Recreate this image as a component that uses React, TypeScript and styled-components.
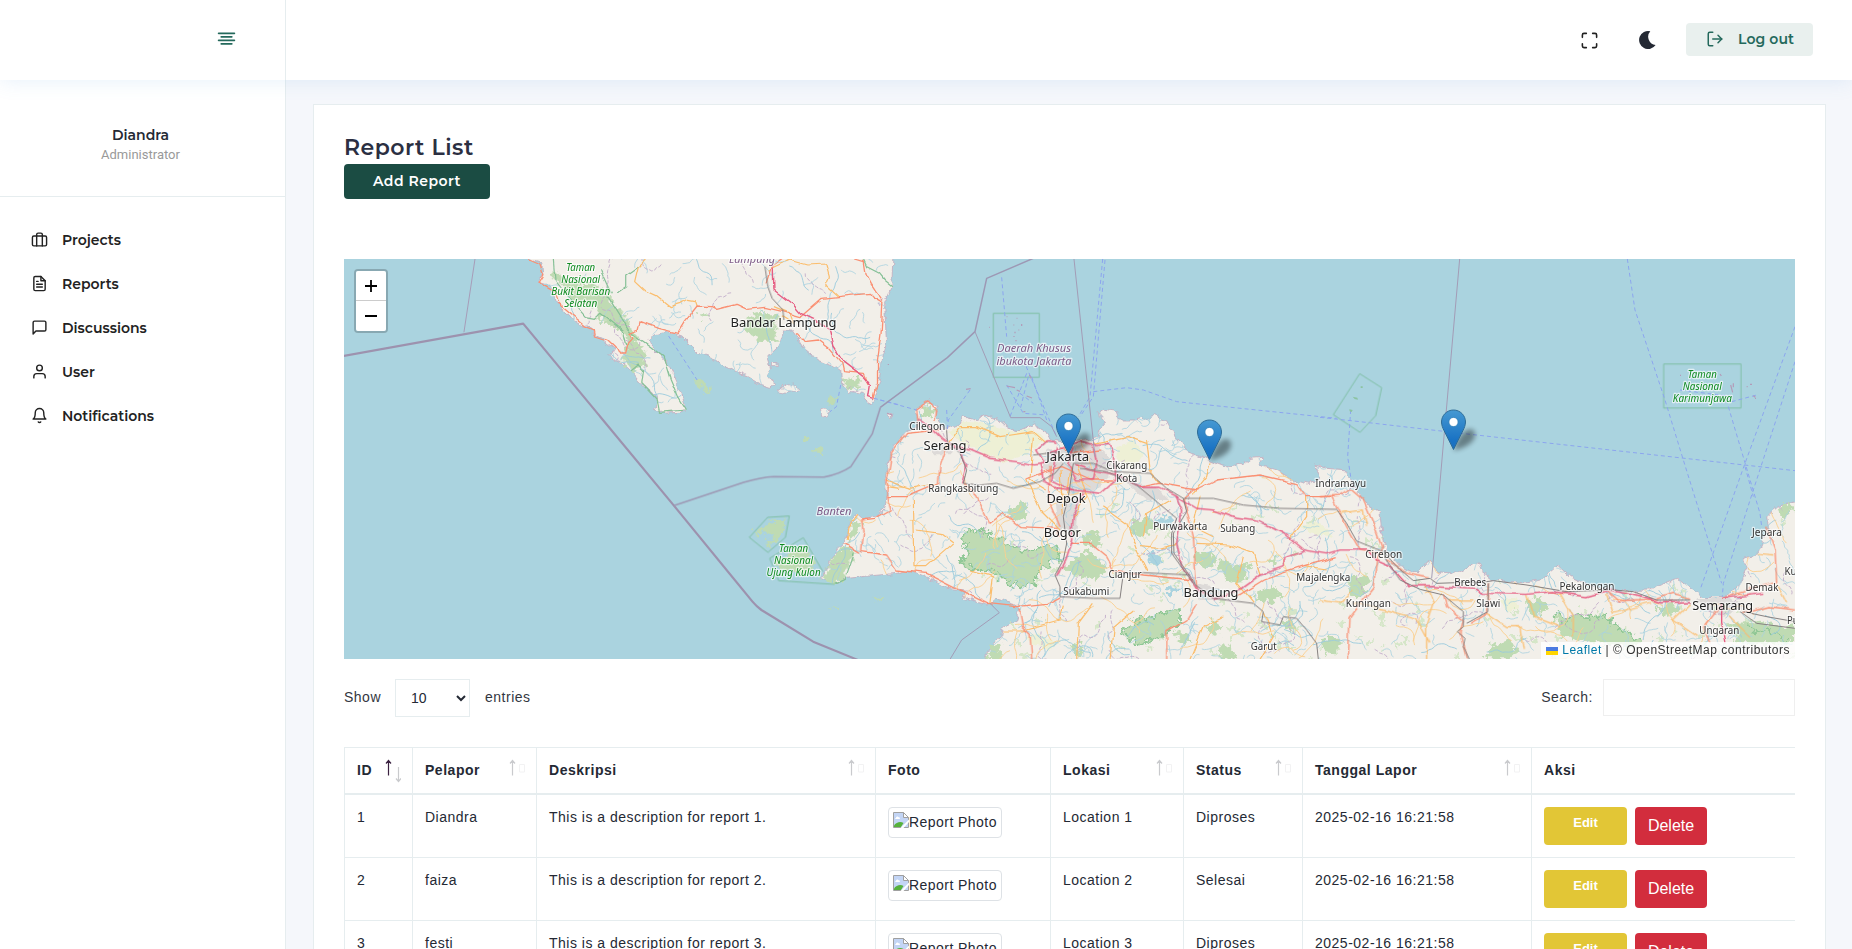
import React from "react";
import styled, { createGlobalStyle } from "styled-components";
import {
  FiAlignCenter,
  FiBell,
  FiBriefcase,
  FiFileText,
  FiLogOut,
  FiMaximize,
  FiMessageSquare,
  FiUser,
} from "react-icons/fi";

const body = '"Liberation Sans", Arial, sans-serif';
const heading = 'Montserrat, Inter, "Open Sans", sans-serif';
const line = "#e6edef";

const GlobalStyle = createGlobalStyle`
  * { box-sizing: border-box; }
  body {
    margin: 0;
    background: #f5f7fb;
    color: #242934;
    font: 14px/21px ${body};
    letter-spacing: 0.5px;
  }
`;

const Page = styled.div`
  height: 949px;
  overflow: hidden;
  display: flex;
  flex-direction: column;
`;

/* ---------- top bar ---------- */

const TopBar = styled.header`
  position: relative;
  z-index: 1;
  flex: none;
  height: 80px;
  display: flex;
  background: #fff;
  box-shadow: 0 0 20px rgba(89, 157, 222, 0.16);
`;

const Brand = styled.div`
  width: 286px;
  border-right: 1px solid ${line};
  padding: 28px 48px 0 0;
  display: flex;
  justify-content: flex-end;
  color: #24695c;
`;

const Actions = styled.div`
  flex: 1;
  display: flex;
  justify-content: flex-end;
  align-items: center;
  padding-right: 39px;
`;

const IconSlot = styled.span<{ $gap: number }>`
  display: flex;
  margin-right: ${(p) => p.$gap}px;
`;

const LogOut = styled.button`
  display: flex;
  align-items: center;
  width: 127px;
  height: 33px;
  margin-bottom: 1px;
  padding: 0 0 1px 20px;
  gap: 14px;
  border: 0;
  border-radius: 4px;
  background: #e9f0ee;
  color: #24695c;
  font: 600 14px/20px ${heading};
  letter-spacing: 0.1px;
  white-space: nowrap;
`;

/* ---------- side bar ---------- */

const Columns = styled.div`
  flex: 1;
  min-height: 0;
  display: flex;
`;

const SideBar = styled.aside`
  width: 286px;
  flex: none;
  background: #fff;
  border-right: 1px solid ${line};
`;

const Profile = styled.div`
  height: 117px;
  padding: 45px 4px 0 0;
  text-align: center;
  border-bottom: 1px solid ${line};
`;

const ProfileName = styled.div`
  font: 600 14px/21px ${heading};
  letter-spacing: 0;
`;

const ProfileRole = styled.div`
  font: 13px/18px Roboto, sans-serif;
  letter-spacing: 0;
  color: #999;
`;

const Menu = styled.nav`
  padding-top: 21px;
`;

const MenuItem = styled.a`
  display: flex;
  align-items: center;
  height: 44px;
  padding-left: 31px;
  gap: 14px;
  font: 600 14px/20px ${heading};
  letter-spacing: 0;
  color: #222;

  svg {
    position: relative;
    top: -1px;
  }
`;

/* ---------- card ---------- */

const Main = styled.main`
  flex: 1;
  min-width: 0;
  padding: 24px 26px 0 27px;
`;

const Card = styled.section`
  height: 900px;
  border: 1px solid ${line};
  background: #fff;
  padding: 29px 30px 0 30px;
`;

const Title = styled.h1`
  margin: 0;
  height: 30px;
  font: 600 22px/28px ${heading};
  letter-spacing: 0.5px;
  color: #2b2f42;
`;

const AddButton = styled.button`
  display: block;
  width: 146px;
  height: 35px;
  margin-bottom: 60px;
  padding: 0 0 2px;
  border: 0;
  border-radius: 4px;
  background: #1b4c43;
  color: #fff;
  font: 600 14px/20px ${heading};
  letter-spacing: 0.5px;
`;

/* ---------- map ---------- */

const MapFrame = styled.div`
  position: relative;
  height: 400px;
  overflow: hidden;
  background: #aad3df;
`;

const MapSvg = styled.svg`
  display: block;
`;

const Zoom = styled.div`
  position: absolute;
  left: 10px;
  top: 10px;
  width: 34px;
  border: 2px solid rgba(0, 0, 0, 0.2);
  background-clip: padding-box;
  border-radius: 4px;
`;

const ZoomButton = styled.button`
  display: flex;
  align-items: center;
  justify-content: center;
  width: 30px;
  height: 30px;
  padding: 0;
  border: 0;
  background: #fff;
  border-radius: 0 0 2px 2px;

  &:first-child {
    border-bottom: 1px solid #ccc;
    border-radius: 2px 2px 0 0;
  }
`;

const Attribution = styled.div`
  position: absolute;
  right: 0;
  bottom: 0;
  display: flex;
  align-items: center;
  height: 17px;
  padding: 0 5px;
  background: rgba(255, 255, 255, 0.8);
  font: 12px/17px ${body};
  letter-spacing: 0.5px;
  color: #333;
  white-space: pre;

  svg {
    margin-right: 4px;
  }
  a {
    color: #0078a8;
  }
`;

/* ---------- table ---------- */

const Controls = styled.div`
  display: flex;
  justify-content: space-between;
  height: 88px;
  padding-top: 20px;
`;

const Control = styled.label<{ $gap: number }>`
  display: flex;
  align-items: center;
  height: 37px;
  gap: ${(p) => p.$gap}px;
  color: #33373f;
`;

const LengthSelect = styled.select`
  width: 75px;
  height: 38px;
  margin-right: 1px;
  padding: 0 0 0 11px;
  border: 1px solid ${line};
  border-radius: 0;
  background: #fff;
  color: #242934;
  font: 14px ${body};
  letter-spacing: 0;
`;

const SearchInput = styled.input`
  width: 192px;
  height: 37px;
  border: 1px solid #efefef;
  background: #fff;
`;

const Table = styled.table`
  width: 1451px;
  table-layout: fixed;
  border-spacing: 0;
  border-top: 1px solid ${line};
`;

const Th = styled.th`
  height: 47px;
  padding: 0 11px 0 12px;
  border-left: 1px solid ${line};
  border-bottom: 2px solid ${line};
  text-align: left;
  font-weight: 700;
  letter-spacing: 0.52px;
`;

const ThInner = styled.div`
  display: flex;
  justify-content: space-between;
  align-items: center;
  height: 45px;
  white-space: nowrap;
`;

const Td = styled.td`
  height: 63px;
  padding: 12px 0 0 12px;
  border-left: 1px solid ${line};
  border-bottom: 1px solid ${line};
  vertical-align: top;
  white-space: nowrap;
`;

const Photo = styled.div`
  display: flex;
  width: 114px;
  height: 31px;
  padding: 4px;
  border: 1px solid #dee2e6;
  border-radius: 4px;
  letter-spacing: 0.45px;
`;

const Buttons = styled.div`
  display: flex;
  gap: 8px;
`;

const EditButton = styled.button`
  width: 83px;
  height: 38px;
  padding: 0 0 7px;
  border: 0;
  border-radius: 4px;
  background: #e2c636;
  color: #fff;
  font: 700 13px/18px ${body};
  letter-spacing: 0;
`;

const DeleteButton = styled.button`
  width: 72px;
  height: 38px;
  padding: 0;
  border: 0;
  border-radius: 4px;
  background: #d22d3d;
  color: #fff;
  font: 16px/24px ${body};
`;

/* ---------- map data ---------- */

const SUMATRA =
  "M527,20L530,30 565,40 568,75 555,97 580,105 600,130 610,165 640,190 660,215 700,238 715,258 740,270 770,295 750,320 785,335 815,362 845,400 885,440 890,462 880,475 895,487 970,483 968,470 955,430 930,370 915,335 885,300 862,270 880,255 920,245 955,258 985,290 1000,307 1040,322 1065,345 1100,360 1140,380 1175,402 1205,412 1220,400 1190,380 1205,355 1195,320 1225,290 1240,240 1265,240 1285,270 1300,295 1340,330 1385,350 1405,365 1408,405 1430,425 1465,430 1480,465 1495,445 1510,390 1520,320 1530,280 1525,160 1545,110 1548,20Z" +
  "M1225,425L1250,405 1270,402 1285,418 1250,430ZM1345,490a12,13 0 1 0 24,0a12,13 0 1 0 -24,0ZM1532,490L1548,487 1545,508ZM1208,335h16v15h-16Z";

const JAVA =
  "M-10,790L10,808 45,800 75,775 82,735 75,690 82,650 100,590 140,545 175,530 170,485 185,462 205,453 228,468 230,505 255,540 300,520 310,500 350,512 370,495 415,508 440,530 480,540 520,522 560,545 575,570 600,575 660,570 715,560 720,540 740,515 715,488 730,478 765,483 775,510 830,510 880,497 920,512 945,560 985,605 1050,630 1100,650 1150,640 1170,625 1210,622 1195,645 1250,660 1300,690 1345,702 1380,680 1365,645 1400,655 1460,660 1470,690 1495,730 1520,765 1560,785 1565,850 1580,900 1620,945 1650,960 1680,965 1710,930 1730,965 1790,970 1850,935 1860,960 1900,990 1990,998 2050,985 2095,948 2130,980 2200,1010 2280,1022 2370,1020 2455,985 2480,1005 2530,1040 2600,1040 2640,1000 2665,950 2650,925 2690,915 2710,870 2725,830 2720,800 2760,765 2820,752 2820,1240 370,1240 400,1180 425,1160 430,1130 470,1110 480,1080 465,1060 410,1045 385,1065 345,1055 310,1045 320,1020 260,1015 200,980 150,960 110,970 26,978 -40,985 -80,1000 -119,985 -97,960 -92,930 -65,895 -39,870 -33,830Z";

const WEST = "translate(-4 -9) scale(.357143 .333333)";
const MID = "translate(516 -9) scale(.333333)";
const EAST = "translate(976 -9) scale(.333333)";

type Layer = { tile: string; d: string };

const forests: Layer[] = [
  {
    tile: WEST,
    d: "M595,60L640,95 700,100 735,120 770,165 800,200 812,245 850,290 855,345 815,362 790,335 803,285 795,250 750,215 725,215 710,170 640,140 595,80ZM1135,205L1165,190 1220,190 1222,275 1180,275 1130,240ZM1412,390L1430,382 1455,390 1452,412 1430,420 1415,412ZM995,387L1015,398 1035,412 1032,435 1010,420ZM1362,445l12,-10 14,6 -8,22 -14,4ZM1290,578l12,-14 12,2 -14,12ZM1320,598l22,-4 4,12 -18,6ZM1160,855L1200,815 1245,808 1240,845 1215,875 1200,892 1195,885 1210,860 1190,840 1165,862ZM1222,935L1265,900 1300,885 1315,920 1330,950 1318,978 1260,960 1230,958ZM1345,985L1365,960 1370,930 1410,888 1440,908 1415,960 1415,985 1385,1000ZM1372,1075l14,-8 14,8 -14,5ZM1498,1050l25,-10 4,6 -26,9ZM1430,810L1465,820 1450,850 1425,880ZM1010,190h16v14h-16Z",
  },
  {
    tile: MID,
    d: "M320,835L350,850 365,835 400,865 430,865 440,885 480,900 530,895 590,885 597,920 560,950 540,955 520,1000 490,1010 450,1005 430,980 380,960 340,960 300,930 330,910 305,880ZM620,960L640,925 680,905 720,925 740,960 710,985 660,980ZM805,830L825,810 870,800 885,830 850,860 820,855ZM1005,930L1020,905 1060,910 1070,940 1040,955ZM1080,970L1075,930 1120,945 1175,940 1150,990 1110,995ZM785,1145L830,1110 900,1090 960,1080 960,1115 915,1150 830,1185ZM935,1150L980,1145 1000,1165 970,1180ZM670,850L710,840 725,870 710,900 680,880ZM440,790L480,755 510,765 500,800 465,810ZM1185,1030L1240,1010 1270,1035 1240,1060 1195,1050ZM1225,935L1240,915 1260,935 1245,955ZM180,480L200,460 220,480 215,500 190,505ZM1035,1130L1060,1110 1090,1130 1060,1155ZM1260,1120L1290,1110 1310,1125 1290,1145ZM400,1180L425,1172 425,1230 378,1230ZM625,1190L655,1175 675,1205 650,1225ZM1075,1190L1110,1180 1130,1225 1080,1228ZM1390,1165L1440,1160 1430,1195 1395,1200Z",
  },
  {
    tile: EAST,
    d: "M85,990L120,975 150,985 140,1020 110,1050 85,1025ZM5,1170L50,1165 60,1195 30,1215 5,1200ZM615,1060L660,1040 685,1075 640,1100ZM705,1090L730,1110 770,1095 830,1105 850,1090 880,1120 960,1170 940,1195 800,1175 720,1160ZM1230,1120L1300,1115 1400,1130 1425,1120 1425,1180 1250,1180ZM1000,1075L1060,1060 1080,1085 1030,1100ZM510,1190L560,1170 600,1200 560,1228 500,1228ZM1370,780L1410,755 1425,780 1390,805Z",
  },
];

const farmland: Layer[] = [
  {
    tile: MID,
    d: "M260,550L310,515 380,520 450,540 520,540 560,570 500,610 430,635 380,610 330,590ZM770,590L820,570 850,610 820,650 770,630ZM1320,830L1360,810 1400,830 1420,860 1350,850ZM500,1160L540,1150 600,1180 570,1200 520,1185ZM-5,740L20,740 5,770Z",
  },
  { tile: EAST, d: "M540,1050L590,1045 600,1070 560,1090ZM0,820L30,840 0,860Z" },
];

const urban: Layer[] = [
  {
    tile: MID,
    d: "M560,600L700,580 750,620 745,680 700,720 640,740 600,700 545,660ZM790,690L900,720 930,750 860,750ZM580,740L660,750 650,840 590,840ZM1000,1000L1080,1010 1100,1050 1020,1050ZM215,580L260,580 280,610 220,610Z",
  },
  { tile: EAST, d: "M1130,1045L1230,1040 1270,1070 1210,1100 1150,1080Z" },
];

const lakes: Layer[] = [
  {
    tile: MID,
    d: "M880,810L905,795 935,805 930,835 900,825ZM855,915L880,905 905,930 900,955 870,935ZM915,1025L950,1005 960,1015 930,1040Z",
  },
];

const motorways: Layer[] = [
  { tile: WEST, d: "M1213,50L1215,120 1270,165 1290,190 1340,215 1370,240 1380,285 1410,335 1465,380 1485,405 1480,440 1495,445" },
  {
    tile: MID,
    d: "M175,508L210,530 245,565 280,590 330,600 390,625 470,635 520,645 555,640 530,600 560,575 590,580M540,640L550,690 600,715 680,725 720,730 765,690 760,610 745,580 690,585 660,575 610,590 570,610M640,640L700,660 770,675 840,712 900,712 945,735 1010,775 1060,780 1130,805 1200,815 1270,850 1330,900 1400,912 1440,900 1530,900M945,735L965,780 960,830 950,880 965,950 1010,1020 1060,1045 1130,1025 1200,975 1270,950 1275,920 1330,900M670,730L640,790 635,870 615,930 590,980M300,600L320,650 305,700M640,590L620,640 650,690 700,690 710,640 700,590M590,590L575,690 640,720",
  },
  {
    tile: EAST,
    d: "M150,905L170,930 215,950 270,1010 340,1010 470,1018 490,1030 620,1033 700,1025 800,1040 870,1020 960,1040 1020,1058 1110,1055M1210,1045L1330,1030M1205,1060L1205,1120 1215,1180",
  },
];

const trunks: Layer[] = [
  {
    tile: WEST,
    d: "M527,27L560,42 568,75 555,97 600,125 610,160 655,200 690,230 712,240 715,258 750,270 770,290 780,312 797,312 803,285 820,265 812,250 835,240 840,215 865,225 890,235 945,250 965,215 1000,168 1040,170 1055,178 1110,163 1140,178 1190,172 1240,185 1290,200 1350,145 1480,130 1490,142 1520,160 1515,250 1505,330 1505,400 1495,445M1440,27L1465,35 1470,70 1485,100 1500,125 1520,155M1280,250L1300,275 1340,270 1370,295 1405,340 1410,365 1465,370 1480,405M1195,100L1210,50 1240,27",
  },
  {
    tile: MID,
    d: "M175,530L170,480 205,455 230,475 225,510M240,540L140,550 95,610 82,690 80,740 90,780 45,805 5,810 10,850 5,905 80,915 110,960 200,970 320,1030 380,1060 470,1070 560,1060 600,1040M260,590L240,650 235,700 140,740 80,740M310,700L350,740 390,820 430,790 480,830 590,835 600,860M630,880L690,880 740,920 760,960 850,975 1000,990M570,650L570,760 600,830M840,712L900,700 1010,720 1070,690 1200,675 1310,700 1340,740 1420,740M480,1075L490,1130 510,1150 515,1228M1010,1060L980,1110 920,1145 920,1228M1130,1040L1210,990 1330,950 1430,920M-50,880L0,910M1000,720L970,745 1000,860 1010,1020M500,690L600,650 690,690 760,690M600,590L640,610 720,600",
  },
  {
    tile: EAST,
    d: "M35,740L80,830 120,900 180,910M0,740L60,735 90,715 130,750 160,820 185,890 170,930 160,1010 120,1060 90,1100 85,1228M200,925L260,970 330,985M370,1035L380,1070 430,1110 420,1150 440,1228M505,1000L500,1090 450,1120M860,1020L900,1055 1000,1050 1060,1030 1110,1045M1210,1045L1290,1020 1370,995 1365,900 1340,830M1270,1090L1350,1070 1425,1080M1205,1060L1150,1130 1170,1180",
  },
];

const primaries: Layer[] = [
  {
    tile: WEST,
    d: "M858,27L835,50 825,95 850,120 890,140 925,170 955,160 975,148 995,152 1000,168M1200,60L1260,30 1310,45 1360,42 1370,80 1360,105 1395,140M1215,170L1260,190 1270,220 1240,200M1530,710L1568,715M1450,793L1425,830 1420,870",
  },
  {
    tile: MID,
    d: "M80,690L150,715 235,700M160,750L165,950 200,950 280,880 240,850 170,840M250,600L300,530 350,530 420,560 520,545 560,580M330,960L400,980 390,1060M430,1140L490,1140 600,1110 610,1070M650,1228L655,1120 700,1060M730,770L800,820 830,900 860,960M500,690L540,780 600,840M520,560L510,690 560,720M600,660L610,800M630,650L620,730M650,640L680,740 640,800M860,570L870,660 900,700M1050,640L1040,680 1000,730M700,580L800,560 860,580M1010,880L1110,885 1180,910 1200,975M840,890L900,895 950,880M1340,740L1340,800 1290,870M1180,1060L1130,1000 1150,920M1330,950L1400,960M930,750L860,790 850,860M1020,740L1000,830 1060,860M750,1228L760,1130 820,1080M990,1228L1030,1130 1090,1100M1210,1085L1240,1160 1200,1228",
  },
  {
    tile: EAST,
    d: "M60,790L130,780 140,830M100,1060L200,1080 290,1105 330,1180M320,1010L340,1060 320,1120 320,1228M500,1090L560,1130 600,1130 610,1200M620,1035L640,1100 720,1130M720,1030L760,1100 760,1160M860,1030L880,1090 990,1060M1110,1060L1060,1110 1130,1160M1310,910L1360,915M1370,1000L1400,1060M1230,1100L1290,1160M0,1050L60,1060 100,1020M380,1050L460,1050",
  },
];

const railways: Layer[] = [
  { tile: WEST, d: "M1190,50L1198,110 1210,145 1240,180 1243,210" },
  {
    tile: MID,
    d: "M260,540L262,575 300,610 320,660 310,700 360,705 410,700 460,715 540,695 585,670 610,640M640,640L700,640 760,665 870,670 920,715 970,745 1060,745 1150,765 1260,775 1430,778 1460,820 1490,873 1570,905M640,640L625,740 610,800 620,880 610,930 585,975 600,1010 600,1040M660,655L740,665 830,705 950,805 935,850 935,910 1000,1000 1060,1045 1180,1060 1210,1085 1205,1115 1260,1125 1270,1100 1310,1105 1340,1140 1370,1180 1375,1228M970,745L980,785 940,850 942,910 1005,1000M600,1040L700,1045 780,1045 790,970 850,968 990,975M520,615L600,605",
  },
  {
    tile: EAST,
    d: "M190,905L230,950 280,992 330,985 350,1000 500,995 520,992 620,1005 740,1025 880,1020 940,1025 1010,1050 1110,1050M195,925L240,990 300,1018 370,1035 430,1085 430,1130 412,1145 435,1165 430,1190 448,1228M505,1000L503,1085 440,1120M1260,1085L1310,1120 1425,1135M1270,1085L1340,1100 1425,1115",
  },
];

const ferries: Layer[] = [
  { tile: WEST, d: "M920,258L1000,390M1402,405L1390,470 1372,485M1495,445L1568,465" },
  {
    tile: MID,
    d: "M425,82L440,260M490,330L590,560M728,27L690,440 655,500M735,30L700,440 660,500M700,425L800,413 850,420 950,455 1430,505M60,450L170,480M330,420L265,510 262,540M440,405L490,490 560,495M505,380L480,480M515,380L560,510M260,480L262,520M480,430L520,460M500,370L450,500",
  },
  {
    tile: EAST,
    d: "M0,502L120,515 380,545 1425,662M922,27L945,180 1035,450 1090,630 1205,1000M1425,230L1275,640 1140,1020M1425,335L1300,720 1210,1000 1207,1040M1225,470L1320,790 1325,830M92,480L83,620 92,680M1235,455L1310,435M1080,420L1240,440M1275,650L1300,740",
  },
];

const reserves: Layer[] = [
  {
    tile: WEST,
    d: "M1197,802L1258,798 1247,862 1198,907 1146,862ZM1385,1003L1228,992 1203,925 1297,863 1352,965",
  },
  { tile: MID, d: "M400,190h138v192h-138Z" },
  { tile: EAST, d: "M1031,342h232v132h-232ZM119,371L185,413 167,497 120,547 40,494Z" },
];

const parkEdges: Layer[] = [
  {
    tile: WEST,
    d: "M600,27L605,95 640,140 690,200 715,205 730,190 790,240 800,285M750,140L812,245 870,290 905,320 925,390 945,440 968,480 895,487 888,450 845,400 850,360 835,345 815,362M840,45L800,75 800,110 775,130M730,60L760,130M1465,27L1475,50 1510,70 1525,90 1548,110M1440,908L1415,985 1385,1000",
  },
  {
    tile: MID,
    d: "M320,835L350,850 365,835 400,865 430,865 440,885 480,900 530,895 590,885 597,920 560,950 540,955 520,1000 490,1010 450,1005 430,980 380,960 340,960 300,930 330,910 305,880ZM785,1145L830,1110 900,1090 960,1080 960,1115 915,1150 830,1185Z",
  },
  {
    tile: EAST,
    d: "M705,1090L730,1110 770,1095 830,1105 850,1090 880,1120 960,1170M1290,1120L1300,1150 1350,1140 1400,1170",
  },
];

const islets: Layer[] = [
  {
    tile: MID,
    d: "M440,200h2M460,225h3M485,222v6M465,245v5M462,258v3M468,270v4M388,232h2M475,240h3M470,205h2M565,350h2M85,342v3M318,418l14,-2M440,408l25,5M500,438l16,6M508,375l6,10M490,485h6M470,420l10,4M82,490l15,5",
  },
  { tile: EAST, d: "M1080,376h3M1200,372l4,6M1232,405l6,22M1240,400v12M1210,450l8,4M1290,403h6M1300,437l6,5M1280,410h3M1305,445h3" },
];

/* Small deterministic generator for streams, lanes and district lines. */
function generator(seed: number) {
  let s = seed;
  return () => {
    s = (s * 1664525 + 1013904223) % 4294967296;
    return s / 4294967296;
  };
}

function scatter(seed: number, count: number, steps: number, stride: number, turn: number, box: number[]) {
  const rnd = generator(seed);
  let d = "";
  for (let i = 0; i < count; i++) {
    let x = box[0] + rnd() * box[2];
    let y = box[1] + rnd() * box[3];
    let a = rnd() * Math.PI * 2;
    d += `M${x.toFixed(1)},${y.toFixed(1)}L`;
    const n = Math.ceil(steps * (0.4 + rnd() * 0.6));
    for (let k = 0; k < n; k++) {
      a += (rnd() - 0.5) * turn;
      x += Math.cos(a) * stride;
      y += Math.sin(a) * stride;
      d += `${x.toFixed(1)},${y.toFixed(1)} `;
    }
  }
  return d;
}

const javaBox = [480, 140, 971, 260];
const sumatraBox = [190, 0, 360, 150];
const streams =
  scatter(7, 1000, 9, 2.4, 1.6, javaBox) + scatter(19, 120, 10, 2.4, 1.5, sumatraBox);
const longStreams = scatter(31, 110, 22, 2.8, 1, javaBox) + scatter(37, 14, 20, 3, 1, sumatraBox);
const districts = scatter(43, 95, 20, 3, 1.7, javaBox) + scatter(47, 18, 20, 3, 1.6, sumatraBox);
const lanes = scatter(53, 110, 15, 4, 1.1, [500, 200, 951, 200]);
const groves = scatter(61, 170, 6, 1.8, 3.8, [620, 250, 831, 150]);

type LabelKind = "city" | "town" | "region" | "park";
type LabelData = [string, number, number, number, LabelKind];

const labels: LabelData[] = [
  ["Lampung", 408, 4, 46, "region"],
  ["Bandar Lampung", 439.6, 67.5, 106, "city"],
  ["Taman", 236.7, 12, 29, "park"],
  ["Nasional", 236.7, 24, 39, "park"],
  ["Bukit Barisan", 236.7, 36, 59, "park"],
  ["Selatan", 236.7, 48, 33, "park"],
  ["Banten", 490, 256, 35, "region"],
  ["Taman", 449.6, 293, 29, "park"],
  ["Nasional", 449.6, 305, 39, "park"],
  ["Ujung Kulon", 449.6, 317, 54, "park"],
  ["Daerah Khusus", 690, 92.5, 74, "region"],
  ["ibukota Jakarta", 690, 106, 75, "region"],
  ["Cilegon", 583.3, 171, 36, "town"],
  ["Serang", 601, 191, 43, "city"],
  ["Jakarta", 723.7, 202, 43, "city"],
  ["Rangkasbitung", 619.3, 233, 70, "town"],
  ["Depok", 722, 243.7, 39, "city"],
  ["Bogor", 718.3, 278.3, 37, "city"],
  ["Cikarang", 782.7, 210.3, 41, "town"],
  ["Kota", 782.7, 222.7, 21, "town"],
  ["Purwakarta", 836.3, 270.7, 54, "town"],
  ["Subang", 893.7, 272.7, 35, "town"],
  ["Cianjur", 781, 319.3, 33, "town"],
  ["Sukabumi", 742.3, 336.3, 46, "town"],
  ["Bandung", 867, 338, 55, "city"],
  ["Garut", 919.7, 391, 26, "town"],
  ["Majalengka", 979.3, 322, 54, "town"],
  ["Indramayu", 996.7, 228, 51, "town"],
  ["Cirebon", 1039.7, 298.7, 37, "town"],
  ["Kuningan", 1024.3, 348, 45, "town"],
  ["Brebes", 1126.3, 327.3, 32, "town"],
  ["Slawi", 1144.3, 348, 24, "town"],
  ["Pekalongan", 1243, 331.3, 55, "town"],
  ["Semarang", 1378.7, 351, 61, "city"],
  ["Ungaran", 1375.3, 374.7, 40, "town"],
  ["Demak", 1418, 331.7, 33, "town"],
  ["Jepara", 1423, 276.7, 30, "town"],
  ["Kudus", 1455, 316, 29, "town"],
  ["Purwodadi", 1467, 365, 48, "town"],
  ["Taman", 1358.3, 118.7, 29, "park"],
  ["Nasional", 1358.3, 130.7, 39, "park"],
  ["Karimunjawa", 1358.3, 142.7, 59, "park"],
];

const labelColor = { city: "#222", town: "#333", region: "#7d5a87", park: "#0d8a1f" };
const labelSize = { city: 13, town: 10, region: 11, park: 10 };

const MapLabel = styled.text<{ $kind: LabelKind }>`
  font-family: "Noto Sans", sans-serif;
  font-size: ${(p) => labelSize[p.$kind]}px;
  font-style: ${(p) => (p.$kind === "region" || p.$kind === "park" ? "italic" : "normal")};
  fill: ${(p) => labelColor[p.$kind]};
  letter-spacing: 0;
  text-anchor: middle;
  paint-order: stroke;
  stroke: rgba(255, 255, 255, 0.65);
  stroke-width: 2.4px;
  stroke-linejoin: round;
`;

const LayerPath = styled.path`
  vector-effect: non-scaling-stroke;
  stroke-linejoin: round;
`;

function Layers({ data }: { data: Layer[] }) {
  return (
    <>
      {data.map((l, i) => (
        <LayerPath key={i} transform={l.tile} d={l.d} />
      ))}
    </>
  );
}

const land: Layer[] = [
  { tile: WEST, d: SUMATRA },
  { tile: MID, d: JAVA },
];

function Pin({ x, y }: { x: number; y: number }) {
  return (
    <g transform={`translate(${x - 12.5} ${y - 41})`}>
      <path d="M12.5 41C16 31 20 23 27 20c7-2 9 5 5 11-5 6-12 8-19.500 10z" fill="#000" opacity="0.4" filter="url(#pinShadow)" />
      <path
        d="M12.500.5C5.900.5.5 5.900.5 12.500c0 3 1.300 6.200 2.400 8.300L12.500 40l9.600-19.200c1.100-2.100 2.400-5.300 2.400-8.300C24.500 5.900 19.100.5 12.500.5z"
        fill="url(#pinFill)"
        stroke="#2e6c97"
        strokeWidth="1"
      />
      <circle cx="12.500" cy="12.500" r="4.600" fill="#fff" stroke="#2f7fb8" strokeWidth="0.8" />
    </g>
  );
}

function ReportMap() {
  return (
    <MapFrame>
      <MapSvg width="1451" height="400" viewBox="0 0 1451 400">
        <defs>
          <clipPath id="land">
            {land.map((l, i) => (
              <path key={i} transform={l.tile} d={l.d} />
            ))}
          </clipPath>
          <filter id="coast" x="0" y="0" width="1451" height="400" filterUnits="userSpaceOnUse">
            <feTurbulence type="fractalNoise" baseFrequency="0.12" numOctaves="3" seed="4" />
            <feDisplacementMap in="SourceGraphic" scale="7" xChannelSelector="R" yChannelSelector="G" />
          </filter>
          <filter id="ragged" x="0" y="0" width="1451" height="400" filterUnits="userSpaceOnUse">
            <feTurbulence type="fractalNoise" baseFrequency="0.16" numOctaves="3" seed="12" />
            <feDisplacementMap in="SourceGraphic" scale="14" xChannelSelector="R" yChannelSelector="G" />
          </filter>
          <filter id="wiggle" x="0" y="0" width="1451" height="400" filterUnits="userSpaceOnUse">
            <feTurbulence type="fractalNoise" baseFrequency="0.06" numOctaves="2" seed="9" />
            <feDisplacementMap in="SourceGraphic" scale="6" xChannelSelector="R" yChannelSelector="G" />
          </filter>
          <filter id="pinShadow" x="-50%" y="-50%" width="200%" height="200%">
            <feGaussianBlur stdDeviation="2.600" />
          </filter>
          <linearGradient id="pinFill" x1="0" y1="0" x2="0" y2="1">
            <stop offset="0" stopColor="#4699d2" />
            <stop offset="0.75" stopColor="#1a73c4" />
            <stop offset="1" stopColor="#1a6fbf" />
          </linearGradient>
        </defs>

        <g filter="url(#coast)">
          <g fill="#f2efe9" stroke="#c3a9bd" strokeWidth="0.8">
            <Layers data={land} />
          </g>
          <g clipPath="url(#land)">
            <g fill="#eef0d5">
              <Layers data={farmland} />
            </g>
            <g fill="#dddad8">
              <Layers data={urban} />
            </g>
          </g>
        </g>

        <g filter="url(#ragged)">
          <g clipPath="url(#land)">
            <path d={groves} fill="#cbe3bd" stroke="#cbe3bd" strokeWidth="3" opacity="0.75" />
          </g>
          <g fill="#bfdbb3">
            <Layers data={forests} />
          </g>
          <g fill="#aad3df">
            <Layers data={lakes} />
          </g>
          <g fill="none" stroke="#8fc795" strokeWidth="1.800">
            <Layers data={[parkEdges[1], parkEdges[2]]} />
          </g>
        </g>

        <g clipPath="url(#land)" fill="none">
          <path d={streams} stroke="#a9d2e0" strokeWidth="0.8" />
          <path d={longStreams} stroke="#9bcbdd" strokeWidth="0.9" />
          <path d={districts} stroke="#c3aecb" strokeWidth="0.9" strokeDasharray="4 1.500" />
          <path d={lanes} stroke="#fbcf8e" strokeWidth="0.9" />
        </g>

        <g filter="url(#wiggle)" fill="none">
          <g stroke="#86c096" strokeWidth="1.200">
            <Layers data={[parkEdges[0]]} />
          </g>
          <g stroke="#fbbd6c" strokeWidth="1.200">
            <Layers data={primaries} />
          </g>
          <g stroke="#fa8f72" strokeWidth="1.300">
            <Layers data={trunks} />
          </g>
          <g stroke="#e65c82" strokeWidth="1.400">
            <Layers data={motorways} />
          </g>
        </g>

        <g fill="none">
          <g stroke="#858080" strokeWidth="1">
            <Layers data={railways} />
          </g>
          <g stroke="#7fbfa5" strokeWidth="1">
            <Layers data={reserves} />
          </g>
          <g stroke="#8ca5ee" strokeWidth="1" strokeDasharray="4 3">
            <Layers data={ferries} />
          </g>
          <g stroke="#b39bb8" strokeWidth="1.200">
            <Layers data={islets} />
          </g>
          <g fill="#8cc3a0">
            <path transform={EAST} d="M122,409h6v5h-6ZM98,440l14,3 2,6 -10,-2ZM88,478l10,2 -3,6 -6,-2Z" />
          </g>
          <LayerPath transform={WEST} d="M378,27L347,247" stroke="#a79cb8" strokeWidth="1" />
          <LayerPath transform={WEST} d="M0,320L513,221 935,767 1155,1055Q1165,1068 1180,1080L1325,1175 1450,1230" stroke="#9d92ae" strokeWidth="2.200" />
          <LayerPath transform={WEST} d="M935,767L1130,697Q1180,682 1215,680L1355,681Q1400,672 1430,650L1490,552 1513,472" stroke="#9d98b4" strokeWidth="1.500" />
          <LayerPath transform={MID} d="M61,472L262,323 345,245 380,85 520,25" stroke="#9d98b4" strokeWidth="1.500" />
          <LayerPath transform={MID} d="M345,245L452,503 540,503 575,530 590,560M642,27L705,620M270,1228L305,1170 418,1088 390,1060" stroke="#a39cb6" strokeWidth="1" />
          <LayerPath transform={EAST} d="M419,27L372,560 335,985" stroke="#a39cb6" strokeWidth="1" />
        </g>

        {labels.map(([name, x, y, w, kind], i) => (
          <MapLabel key={i} x={x} y={y} textLength={w} lengthAdjust="spacingAndGlyphs" $kind={kind}>
            {name}
          </MapLabel>
        ))}

        <Pin x={724.5} y={195.5} />
        <Pin x={865.5} y={201.5} />
        <Pin x={1109.5} y={191.5} />
      </MapSvg>

      <Zoom>
        <ZoomButton aria-label="Zoom in">
          <svg width="12" height="12" viewBox="0 0 12 12">
            <path d="M0 6h12M6 0v12" stroke="#000" strokeWidth="1.800" />
          </svg>
        </ZoomButton>
        <ZoomButton aria-label="Zoom out">
          <svg width="12" height="12" viewBox="0 0 12 12">
            <path d="M0 6h12" stroke="#000" strokeWidth="2" />
          </svg>
        </ZoomButton>
      </Zoom>
      <Attribution>
        <svg width="12" height="8" viewBox="0 0 12 8">
          <path fill="#4c7be1" d="M0 0h12v4H0z" />
          <path fill="#ffd500" d="M0 4h12v4H0z" />
        </svg>
        <a>Leaflet</a> | © OpenStreetMap contributors
      </Attribution>
    </MapFrame>
  );
}

/* ---------- small drawings ---------- */

function SortIcon({ active }: { active?: boolean }) {
  return (
    <svg width="18" height="24" viewBox="0 0 18 24" fill="none">
      <path
        d="M5.500 1.500v15M3 4.500L5.500 1.500 8 4.500"
        stroke={active ? "#3a2140" : "#c9cacd"}
        strokeWidth="1.200"
      />
      {active ? (
        <path d="M15.500 8v14.500M13 19.500l2.500 3 2.500-3" stroke="#c9cacd" strokeWidth="1.200" />
      ) : (
        <path d="M12.500 5.500h5v7.500h-5z" stroke="#f2f2f3" />
      )}
    </svg>
  );
}

function BrokenImage() {
  return (
    <svg width="16" height="16" viewBox="0 0 16 16">
      <path d="M.5.5h10l5 5v10H.5z" fill="#c3d5f5" stroke="#a0a0a0" />
      <path d="M3 6c0-1.500 2-2 2.500-.8C7 5 7.500 6.500 6.500 7h-4C1.700 7 2 6 3 6z" fill="#fff" />
      <path d="M1 15v-1.500C3 10 8 9 10.500 11L8 15z" fill="#56b13c" />
      <path d="M7.500 16L16 7.500V10l-5.500 6z" fill="#fff" />
      <path d="M10.500.5v5h5z" fill="#fff" stroke="#a0a0a0" />
    </svg>
  );
}

function Moon() {
  return (
    <svg width="17" height="18" viewBox="0 0 17 18">
      <path d="M11.300.3A9 9 0 1 0 16.600 14 8 8.200 0 0 1 11.300.3z" fill="#242934" />
    </svg>
  );
}

/* ---------- page ---------- */

const menu = [
  { text: "Projects", Icon: FiBriefcase },
  { text: "Reports", Icon: FiFileText },
  { text: "Discussions", Icon: FiMessageSquare },
  { text: "User", Icon: FiUser },
  { text: "Notifications", Icon: FiBell },
];

const columns = [
  { title: "ID", width: 68, sort: true },
  { title: "Pelapor", width: 124, sort: true },
  { title: "Deskripsi", width: 339, sort: true },
  { title: "Foto", width: 175, sort: false },
  { title: "Lokasi", width: 133, sort: true },
  { title: "Status", width: 119, sort: true },
  { title: "Tanggal Lapor", width: 229, sort: true },
  { title: "Aksi", width: 264, sort: false },
];

const reports = [
  { id: 1, name: "Diandra", status: "Diproses" },
  { id: 2, name: "faiza", status: "Selesai" },
  { id: 3, name: "festi", status: "Diproses" },
];

export default function App() {
  return (
    <Page>
      <GlobalStyle />
      <TopBar>
        <Brand>
          <FiAlignCenter size={21} />
        </Brand>
        <Actions>
          <IconSlot $gap={40}>
            <FiMaximize size={19} color="#222" />
          </IconSlot>
          <IconSlot $gap={30}>
            <Moon />
          </IconSlot>
          <LogOut>
            <FiLogOut size={18} />
            Log out
          </LogOut>
        </Actions>
      </TopBar>
      <Columns>
        <SideBar>
          <Profile>
            <ProfileName>Diandra</ProfileName>
            <ProfileRole>Administrator</ProfileRole>
          </Profile>
          <Menu>
            {menu.map(({ text, Icon }) => (
              <MenuItem key={text}>
                <Icon size={17} />
                {text}
              </MenuItem>
            ))}
          </Menu>
        </SideBar>
        <Main>
          <Card>
            <Title>Report List</Title>
            <AddButton>Add Report</AddButton>
            <ReportMap />
            <Controls>
              <Control $gap={14}>
                Show
                <LengthSelect defaultValue="10">
                  <option>10</option>
                  <option>25</option>
                </LengthSelect>
                entries
              </Control>
              <Control $gap={10}>
                Search:
                <SearchInput />
              </Control>
            </Controls>
            <Table>
              <colgroup>
                {columns.map((c) => (
                  <col key={c.title} width={c.width} />
                ))}
              </colgroup>
              <thead>
                <tr>
                  {columns.map((c) => (
                    <Th key={c.title}>
                      <ThInner>
                        {c.title}
                        {c.sort && <SortIcon active={c.title === "ID"} />}
                      </ThInner>
                    </Th>
                  ))}
                </tr>
              </thead>
              <tbody>
                {reports.map((r) => (
                  <tr key={r.id}>
                    <Td>{r.id}</Td>
                    <Td>{r.name}</Td>
                    <Td>This is a description for report {r.id}.</Td>
                    <Td>
                      <Photo>
                        <BrokenImage />
                        Report Photo
                      </Photo>
                    </Td>
                    <Td>Location {r.id}</Td>
                    <Td>{r.status}</Td>
                    <Td>2025-02-16 16:21:58</Td>
                    <Td>
                      <Buttons>
                        <EditButton>Edit</EditButton>
                        <DeleteButton>Delete</DeleteButton>
                      </Buttons>
                    </Td>
                  </tr>
                ))}
              </tbody>
            </Table>
          </Card>
        </Main>
      </Columns>
    </Page>
  );
}
